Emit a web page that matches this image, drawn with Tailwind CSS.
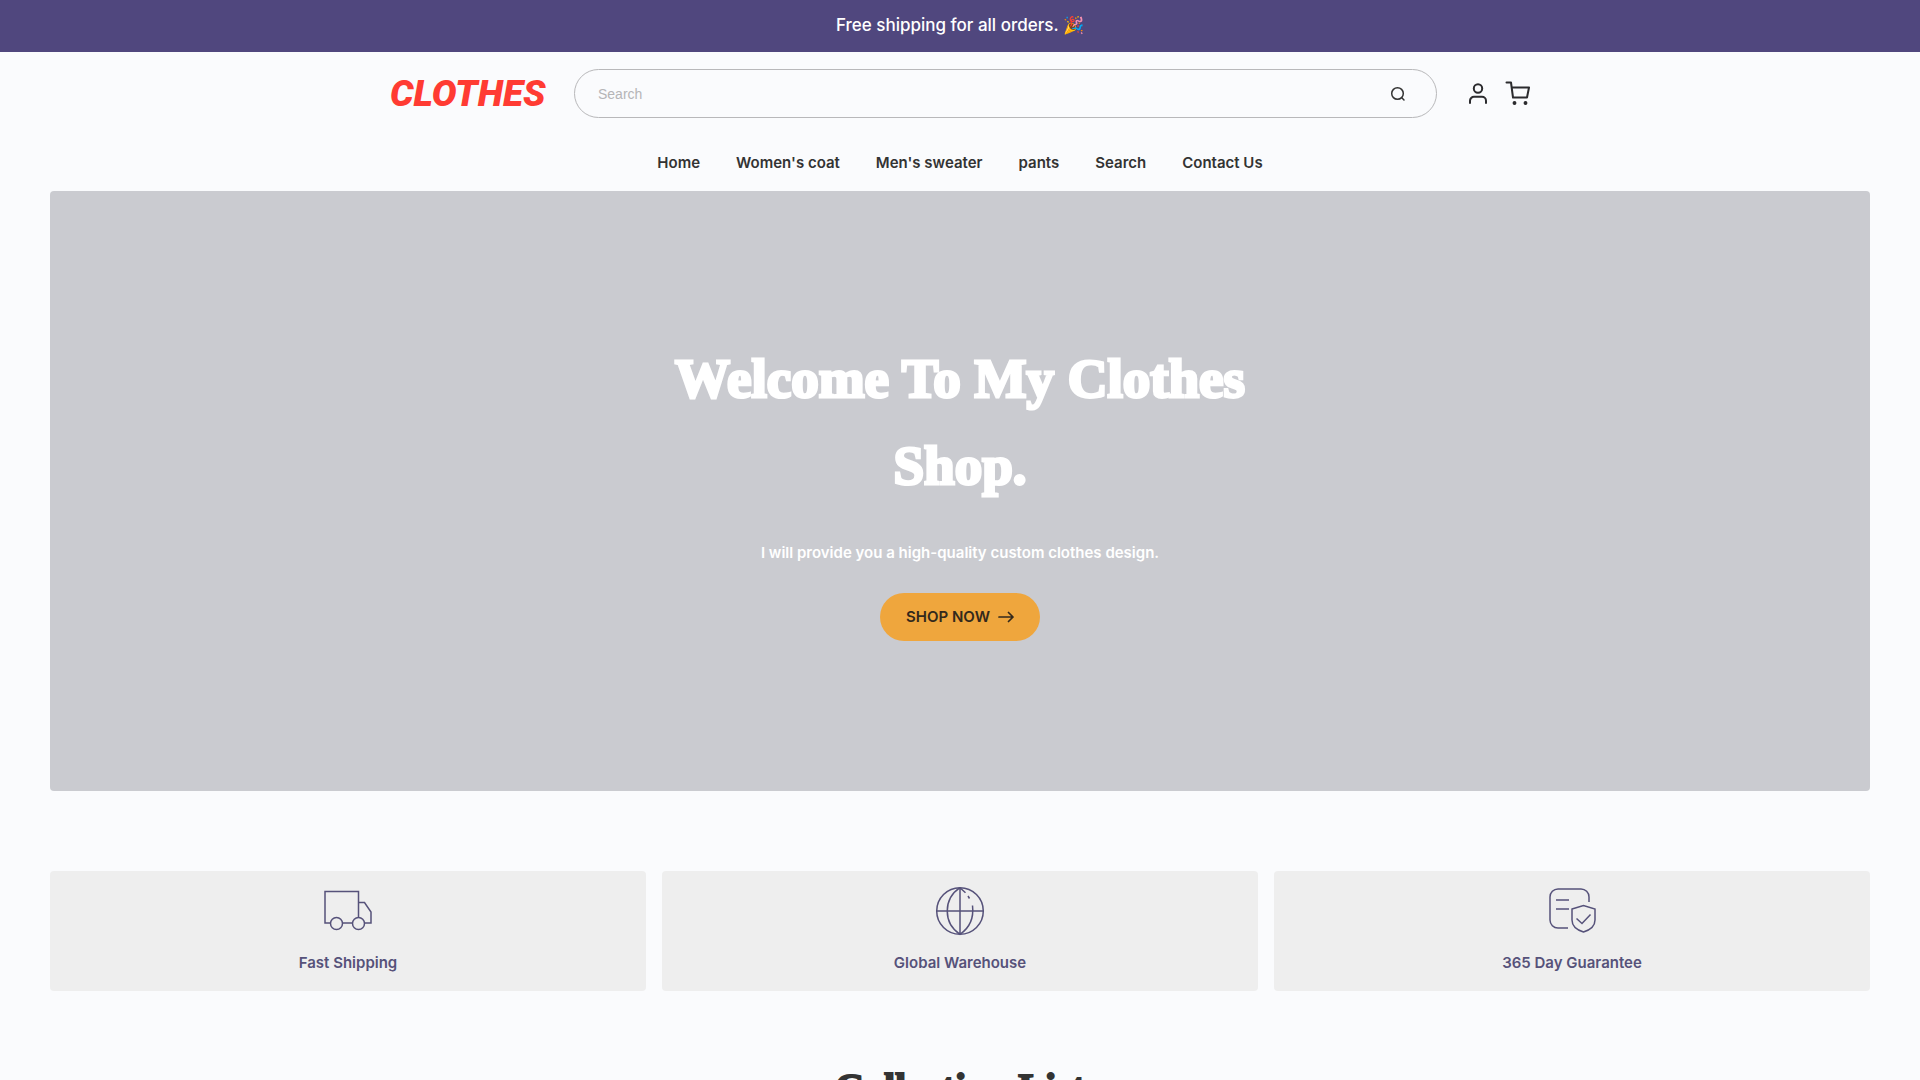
<!DOCTYPE html>
<html lang="en">
<head>
<meta charset="utf-8">
<meta name="viewport" content="width=device-width, initial-scale=1">
<title>Clothes Shop</title>
<script src="https://cdn.jsdelivr.net/npm/@tailwindcss/browser@4"></script>
</head>
<body class="h-screen overflow-hidden bg-[#fafbfd] font-['Inter','Noto_Sans',sans-serif] text-[#333333]">
<div class="flex h-13 items-center justify-center bg-[#50477e] text-[17px] font-medium text-white">
  <p class="font-['Inter','Noto_Color_Emoji',sans-serif]">Free shipping for all orders. 🎉</p>
</div>
<header>
  <div class="mx-auto flex h-[83px] max-w-[1146px] items-center pl-[3px]">
    <a href="#" class="w-40 font-['Roboto',sans-serif] text-[37px] leading-none font-black text-[#ff3b33] italic">CLOTHES</a>
    <form class="ml-6 flex h-[49px] grow items-center rounded-full border border-[#b8b8ba] pr-[30px] pl-[23px]">
      <input type="text" aria-label="Search" placeholder="Search" class="h-full min-w-0 grow bg-transparent font-['Liberation_Sans',sans-serif] text-sm outline-none placeholder:text-[#b5b5b7]">
      <button type="button" aria-label="Submit search">
        <svg class="size-4" viewBox="0 0 16 16" fill="none" stroke="#333" stroke-width="1.5" stroke-linecap="round"><circle cx="7.5" cy="7.5" r="5.8"/><path d="M11.8 11.8 14 14"/></svg>
      </button>
    </form>
    <div class="ml-7 flex items-center gap-3">
      <a href="#" aria-label="Account">
        <svg class="size-7" viewBox="0 0 28 28" fill="none" stroke="#2b2b2e" stroke-width="2" stroke-linecap="round"><circle cx="13" cy="8.5" r="4.2"/><path d="M5 23v-2.200a4 4 0 0 1 4-4h8a4 4 0 0 1 4 4v2.200"/></svg>
      </a>
      <a href="#" aria-label="Cart">
        <svg class="size-7" viewBox="0 0 28 28" fill="none" stroke="#2b2b2e" stroke-width="2" stroke-linecap="round" stroke-linejoin="round"><path d="M1.500 2.500H6l2 15h14l2-10H7"/><circle cx="9.500" cy="23" r="1.200" fill="#2b2b2e" stroke-width="1.5"/><circle cx="20.500" cy="23" r="1.200" fill="#2b2b2e" stroke-width="1.5"/></svg>
      </a>
    </div>
  </div>
  <nav class="flex h-14 items-center justify-center gap-9 text-[15px] font-semibold">
    <a href="#">Home</a><a href="#">Women's coat</a><a href="#">Men's sweater</a><a href="#">pants</a><a href="#">Search</a><a href="#">Contact Us</a>
  </nav>
</header>
<main class="px-[50px]">
  <section class="flex h-[600px] flex-col items-center justify-center rounded bg-[#cacbd0] pb-1.5 text-center text-white">
    <h1 class="max-w-[600px] font-['Liberation_Serif',serif] text-[55px] leading-[87px] font-bold [-webkit-text-stroke:3px_white]">Welcome To My Clothes Shop.</h1>
    <p class="mt-8 text-[15px] leading-6 font-semibold">I will provide you a high-quality custom clothes design.</p>
    <button type="button" class="mt-7 flex h-12 w-40 items-center justify-center gap-2 rounded-full bg-[#efa63d] text-[15px] font-semibold text-[#33291c]">SHOP NOW
      <svg class="size-4" viewBox="0 0 16 16" fill="none" stroke="currentColor" stroke-width="1.7" stroke-linecap="round" stroke-linejoin="round"><path d="M1 8h14M10.5 3.5 15 8l-4.500 4.500"/></svg>
    </button>
  </section>
  <section class="mt-20 grid grid-cols-3 gap-4 text-[15px] leading-6 font-semibold text-[#56527a]">
    <div class="flex h-30 flex-col items-center rounded bg-[#eeeeee] pt-3">
      <svg class="size-14" viewBox="0 0 56 56" fill="none" stroke="currentColor" stroke-width="1.5"><path d="M11 40H5V8.500h33.500V35M38.500 19.500h6L51 29v11h-6M22.500 40h10"/><circle cx="16.500" cy="40.500" r="6"/><circle cx="38.500" cy="40.500" r="6"/></svg>
      <p class="mt-3">Fast Shipping</p>
    </div>
    <div class="flex h-30 flex-col items-center rounded bg-[#eeeeee] pt-3">
      <svg class="size-14" viewBox="0 0 56 56" fill="none" stroke="currentColor" stroke-width="1.5"><circle cx="28" cy="28" r="23.300"/><path d="M28 4.700v46.600M4.700 28h46.600M28 4.700C11 16 11 40 28 51.300 38 44.500 42 35 40.500 22.500M28 4.700l5.500 5M36 13l1.500 2.500"/></svg>
      <p class="mt-3">Global Warehouse</p>
    </div>
    <div class="flex h-30 flex-col items-center rounded bg-[#eeeeee] pt-3">
      <svg class="size-14" viewBox="0 0 56 56" fill="none" stroke="currentColor" stroke-width="1.5"><path d="M24 45h-10a8 8 0 0 1-8-8V14a8 8 0 0 1 8-8h23a8 8 0 0 1 8 8v5M12 17h13M12 26h13M28 26l11.500-3.500L51 26v11c0 6-5 10-11.500 12C33 47 28 43 28 37zM32.500 35.500l5.500 5 8.500-9"/></svg>
      <p class="mt-3">365 Day Guarantee</p>
    </div>
  </section>
  <h2 class="mt-16 text-center font-['Liberation_Serif',serif] text-[40px] leading-[66px] font-bold [-webkit-text-stroke:2px_#333333]">Collection List</h2>
</main>
</body>
</html>
